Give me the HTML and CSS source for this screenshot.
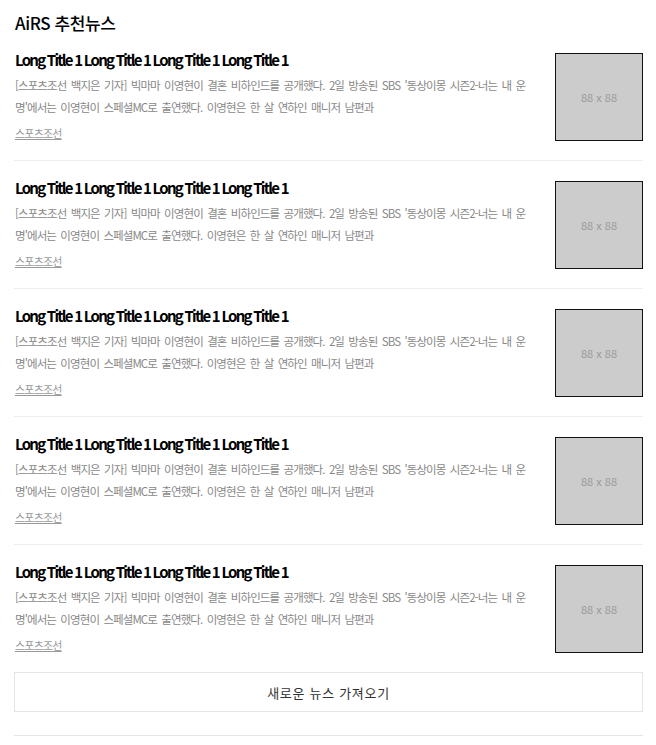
FILE: index.html
```html
<!DOCTYPE html>
<html lang="ko">
<head>
<meta charset="utf-8">
<title>AiRS 추천뉴스</title>
<link rel="stylesheet" href="styles.css">
</head>
<body>
<section class="airs">
  <h2 class="airs-title">AiRS 추천뉴스</h2>
  <ul class="news-list">
    <li class="news-item">
      <div class="news-text">
        <a class="news-headline" href="#">Long Title 1 Long Title 1 Long Title 1 Long Title 1</a>
        <p class="news-desc">[스포츠조선 백지은 기자] 빅마마 이영현이 결혼 비하인드를 공개했다. 2일 방송된 SBS '동상이몽 시즌2-너는 내 운명'에서는 이영현이 스페셜MC로 출연했다. 이영현은 한 살 연하인 매니저 남편과</p>
        <a class="news-source" href="#">스포츠조선</a>
      </div>
      <div class="news-thumb">88 x 88</div>
    </li>
    <li class="news-item">
      <div class="news-text">
        <a class="news-headline" href="#">Long Title 1 Long Title 1 Long Title 1 Long Title 1</a>
        <p class="news-desc">[스포츠조선 백지은 기자] 빅마마 이영현이 결혼 비하인드를 공개했다. 2일 방송된 SBS '동상이몽 시즌2-너는 내 운명'에서는 이영현이 스페셜MC로 출연했다. 이영현은 한 살 연하인 매니저 남편과</p>
        <a class="news-source" href="#">스포츠조선</a>
      </div>
      <div class="news-thumb">88 x 88</div>
    </li>
    <li class="news-item">
      <div class="news-text">
        <a class="news-headline" href="#">Long Title 1 Long Title 1 Long Title 1 Long Title 1</a>
        <p class="news-desc">[스포츠조선 백지은 기자] 빅마마 이영현이 결혼 비하인드를 공개했다. 2일 방송된 SBS '동상이몽 시즌2-너는 내 운명'에서는 이영현이 스페셜MC로 출연했다. 이영현은 한 살 연하인 매니저 남편과</p>
        <a class="news-source" href="#">스포츠조선</a>
      </div>
      <div class="news-thumb">88 x 88</div>
    </li>
    <li class="news-item">
      <div class="news-text">
        <a class="news-headline" href="#">Long Title 1 Long Title 1 Long Title 1 Long Title 1</a>
        <p class="news-desc">[스포츠조선 백지은 기자] 빅마마 이영현이 결혼 비하인드를 공개했다. 2일 방송된 SBS '동상이몽 시즌2-너는 내 운명'에서는 이영현이 스페셜MC로 출연했다. 이영현은 한 살 연하인 매니저 남편과</p>
        <a class="news-source" href="#">스포츠조선</a>
      </div>
      <div class="news-thumb">88 x 88</div>
    </li>
    <li class="news-item">
      <div class="news-text">
        <a class="news-headline" href="#">Long Title 1 Long Title 1 Long Title 1 Long Title 1</a>
        <p class="news-desc">[스포츠조선 백지은 기자] 빅마마 이영현이 결혼 비하인드를 공개했다. 2일 방송된 SBS '동상이몽 시즌2-너는 내 운명'에서는 이영현이 스페셜MC로 출연했다. 이영현은 한 살 연하인 매니저 남편과</p>
        <a class="news-source" href="#">스포츠조선</a>
      </div>
      <div class="news-thumb">88 x 88</div>
    </li>
  </ul>
  <button class="more-btn" type="button">새로운 뉴스 가져오기</button>
  <div class="bottom-line"></div>
</section>
</body>
</html>
```

FILE: styles.css
```css
* { box-sizing: border-box; }
html, body { margin: 0; padding: 0; background: #fff; }
body {
  font-family: "Noto Sans CJK KR", "Noto Sans", sans-serif;
  color: #000;
}
.airs {
  margin: 0 13px 0 14px;
  padding-top: 12px;
}
.airs-title {
  margin: 0 0 0 1px;
  height: 21px;
  font-size: 17px;
  line-height: 21px;
  font-weight: 500;
  letter-spacing: -0.4px;
}
.news-list {
  list-style: none;
  margin: 0;
  padding: 0;
}
.news-item {
  display: flex;
  align-items: flex-start;
  padding: 20px 0 19px;
  border-bottom: 1px solid #eee;
}
.news-item:last-child { border-bottom: none; }
.news-text {
  flex: 1;
  min-width: 0;
  margin-right: 22px;
  padding-left: 1px;
  display: flex;
  flex-direction: column;
  align-items: flex-start;
}
.news-headline {
  display: block;
  margin-top: -3px;
  font-size: 15px;
  line-height: 20px;
  font-weight: 700;
  color: #000;
  text-decoration: none;
  letter-spacing: -1.75px;
}
.news-desc {
  margin: 4px 0 0;
  font-size: 11.5px;
  line-height: 22px;
  color: #888;
  letter-spacing: -0.9px;
  word-spacing: 2px;
}
.news-source {
  margin-top: 8px;
  font-size: 11px;
  line-height: 14px;
  color: #999;
  letter-spacing: -0.8px;
  text-decoration: underline;
}
.news-thumb {
  flex: none;
  width: 88px;
  height: 88px;
  border: 1px solid #111;
  background: #ccc;
  color: #9a9a9a;
  font-size: 11px;
  display: flex;
  align-items: center;
  justify-content: center;
}
.more-btn {
  display: block;
  width: 100%;
  height: 40px;
  margin: 0;
  padding: 0;
  background: #fff;
  border: 1px solid #e5e5e5;
  font-family: inherit;
  font-size: 13px;
  color: #333;
  letter-spacing: 0.7px;
  cursor: pointer;
}
.bottom-line {
  margin-top: 23px;
  border-top: 1px solid #e5e5e5;
}
```
